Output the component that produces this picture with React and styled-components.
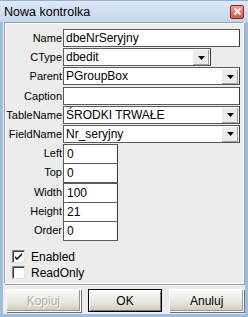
import React from 'react';
import styled, { createGlobalStyle } from 'styled-components';

const GlobalStyle = createGlobalStyle`
  html, body {
    margin: 0;
    padding: 0;
    background: #ffffff;
  }
  body {
    font-family: "Liberation Sans", Arial, sans-serif;
    font-size: 11px;
    color: #000;
  }
`;

const Window = styled.div`
  box-sizing: border-box;
  width: 248px;
  height: 317px;
  display: flex;
  flex-direction: column;
  background: #ececec;
  border: 3px solid #9dbde3;
  border-top: none;
`;

const TitleBar = styled.div`
  height: 22px;
  margin: 0 -3px;
  padding: 0 4px 0 4px;
  display: flex;
  align-items: center;
  justify-content: space-between;
  background: linear-gradient(#dde9f7, #c3d7ef);
  border-top: 1px solid #8fb0d8;
  box-sizing: border-box;
`;

const Title = styled.span`
  font-size: 12.5px;
  color: #000;
  padding-top: 1px;
`;

const CloseButton = styled.div`
  width: 14px;
  height: 14px;
  box-sizing: border-box;
  border: 1px solid #8a2b21;
  border-radius: 2px;
  background: linear-gradient(#eba394, #cf5a48);
  display: flex;
  align-items: center;
  justify-content: center;
`;

const Body = styled.div`
  flex: 1;
  display: flex;
  flex-direction: column;
  padding: 0 1px 0 1px;
`;

const Panel = styled.div`
  height: 262px;
  box-sizing: border-box;
  border: 1px solid #a0a0a0;
  border-right-color: #ffffff;
  border-bottom-color: #ffffff;
  box-shadow: inset 1px 1px 0 #ffffff, 1px 1px 0 #a0a0a0;
  padding: 6px 3px 0 0;
  display: flex;
  flex-direction: column;
`;

const Fields = styled.div`
  display: grid;
  grid-template-columns: 57px 1fr;
  grid-auto-rows: 19.2px;
  column-gap: 1px;
`;

const Label = styled.div`
  text-align: right;
  line-height: 19px;
  white-space: nowrap;
`;

const Box = styled.div`
  box-sizing: border-box;
  height: 18px;
  width: ${p => p.$width || '100%'};
  background: #fff;
  border: 1px solid #5a5a5a;
  border-right-color: #3a3a3a;
  display: flex;
  align-items: center;
  padding-left: 2px;
  font-size: 12px;
  white-space: nowrap;
`;

const SmallBox = styled(Box)`
  height: 20px;
  width: 55px;
  margin-bottom: -1px;
  padding-left: 3px;
`;

const BoxText = styled.span`
  flex: 1;
  line-height: 16px;
`;

const DropButton = styled.div`
  width: 17px;
  height: 16px;
  box-sizing: border-box;
  background: #ececec;
  border-left: 1px solid #fff;
  border-top: 1px solid #fff;
  box-shadow: inset -1px -1px 0 #a0a0a0;
  display: flex;
  align-items: center;
  justify-content: center;
`;

const Checks = styled.div`
  margin-top: 10px;
  padding-left: 7px;
  display: flex;
  flex-direction: column;
  gap: 3px;
`;

const CheckRow = styled.label`
  display: flex;
  align-items: center;
  gap: 6px;
  height: 13px;
  font-size: 12px;
`;

const CheckBox = styled.span`
  width: 13px;
  height: 13px;
  box-sizing: border-box;
  background: #fff;
  border: 1px solid #808080;
  border-right-color: #e0e0e0;
  border-bottom-color: #e0e0e0;
  box-shadow: inset 1px 1px 0 #404040;
  display: flex;
  align-items: center;
  justify-content: center;
`;

const Footer = styled.div`
  display: flex;
  gap: 7px;
  padding: 5px 0 0 2px;
`;

const Button = styled.div`
  width: 75px;
  height: 23px;
  box-sizing: border-box;
  display: flex;
  align-items: center;
  justify-content: center;
  font-size: 12px;
  border: 1px solid ${p => (p.$default ? '#000' : '#ffffff')};
  box-shadow: ${p =>
    p.$default
      ? 'inset 1px 1px 0 #fff, inset -1px -1px 0 #7a7a7a'
      : 'inset -1px -1px 0 #9a9a8a, 1px 1px 0 #6f6f6f'};
  background: linear-gradient(#fbfbf8, #e6e6de 60%, #cacabb);
  color: ${p => (p.$disabled ? '#b0ae9e' : '#000')};
  text-shadow: ${p => (p.$disabled ? '1px 1px 0 #fff' : 'none')};
`;

const Arrow = () => (
  <svg width="7" height="4" viewBox="0 0 7 4">
    <path d="M0 0h7L3.5 4z" fill="#000" />
  </svg>
);

const Combo = ({ value, width }) => (
  <Box $width={width} style={{ paddingRight: 1 }}>
    <BoxText>{value}</BoxText>
    <DropButton>
      <Arrow />
    </DropButton>
  </Box>
);

const Check = ({ checked, children }) => (
  <CheckRow>
    <CheckBox>
      {checked && (
        <svg width="9" height="9" viewBox="0 0 9 9">
          <path d="M1 4l2 2 5-5v2L3 8 1 6z" fill="#000" />
        </svg>
      )}
    </CheckBox>
    {children}
  </CheckRow>
);

const App = () => {
  return (
    <>
      <GlobalStyle />
      <Window>
        <TitleBar>
          <Title>Nowa kontrolka</Title>
          <CloseButton>
            <svg width="7" height="7" viewBox="0 0 7 7">
              <path d="M0.5 0.5l6 6M6.5 0.5l-6 6" stroke="#fff" strokeWidth="1.8" />
            </svg>
          </CloseButton>
        </TitleBar>
        <Body>
          <Panel>
            <Fields>
              <Label>Name</Label>
              <Box>dbeNrSeryjny</Box>
              <Label>CType</Label>
              <Combo value="dbedit" width="148px" />
              <Label>Parent</Label>
              <Combo value="PGroupBox" />
              <Label>Caption</Label>
              <Box />
              <Label>TableName</Label>
              <Combo value="ŚRODKI TRWAŁE" />
              <Label>FieldName</Label>
              <Combo value="Nr_seryjny" />
              <Label>Left</Label>
              <SmallBox>0</SmallBox>
              <Label>Top</Label>
              <SmallBox>0</SmallBox>
              <Label>Width</Label>
              <SmallBox>100</SmallBox>
              <Label>Height</Label>
              <SmallBox>21</SmallBox>
              <Label>Order</Label>
              <SmallBox>0</SmallBox>
            </Fields>
            <Checks>
              <Check checked>Enabled</Check>
              <Check>ReadOnly</Check>
            </Checks>
          </Panel>
          <Footer>
            <Button $disabled>Kopiuj</Button>
            <Button $default>OK</Button>
            <Button>Anuluj</Button>
          </Footer>
        </Body>
      </Window>
    </>
  );
};

export default App;
